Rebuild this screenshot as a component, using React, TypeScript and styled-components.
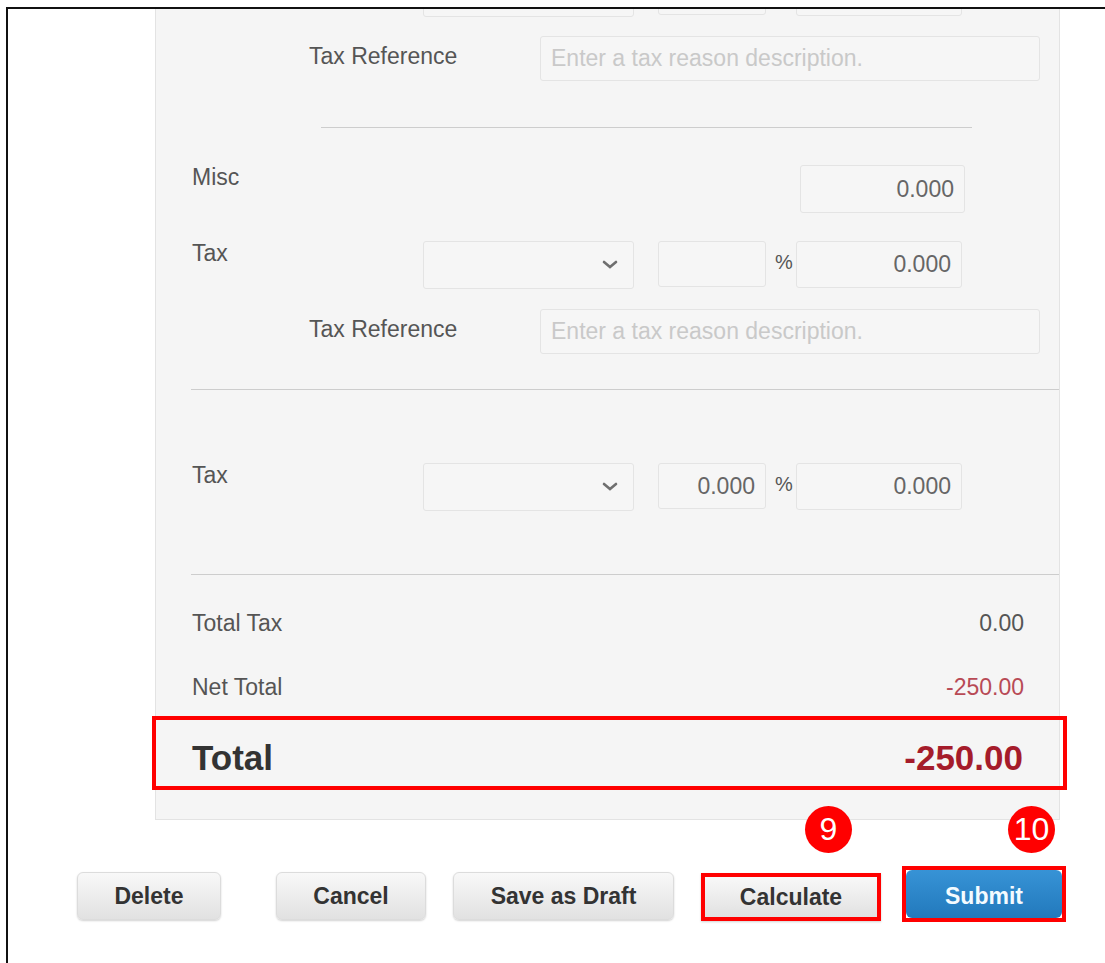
import React from "react";
import styled, { createGlobalStyle } from "styled-components";

const GlobalStyle = createGlobalStyle`
  html, body {
    margin: 0;
    padding: 0;
    background: #fff;
  }
  body {
    font-family: "Liberation Sans", Arial, sans-serif;
    color: #555;
  }
`;

const Frame = styled.div`
  margin: 7px 0 0 6px;
  height: 956px;
  box-sizing: border-box;
  border-top: 2px solid #111;
  border-left: 2px solid #111;
  overflow: hidden;
`;

const Panel = styled.div`
  margin-left: 147px;
  width: 905px;
  height: 811px;
  box-sizing: border-box;
  background: #f5f5f5;
  border: 1px solid #e3e3e3;
  border-top: none;
  display: flex;
  flex-direction: column;
`;

const FieldBox = styled.div<{ $width: number; $height?: number }>`
  width: ${(p) => p.$width}px;
  height: ${(p) => p.$height ?? 48}px;
  box-sizing: border-box;
  flex-shrink: 0;
  background: #f6f6f6;
  border: 1px solid #e4e4e4;
  border-radius: 3px;
  display: flex;
  align-items: center;
  padding: 0 10px;
  font-size: 23px;
  color: #666;
`;

const NumberBox = styled(FieldBox)`
  justify-content: flex-end;
`;

const Placeholder = styled.span`
  color: #c9c9c9;
`;

const SelectBox = styled(FieldBox)`
  justify-content: flex-end;
  padding-right: 15px;
`;

const Label = styled.div<{ $width: number }>`
  width: ${(p) => p.$width}px;
  flex-shrink: 0;
  font-size: 23px;
  line-height: 24px;
  color: #555;
`;

const RefLabel = styled(Label)`
  padding-bottom: 6px;
`;

const FieldRow = styled.div<{ $top: number }>`
  display: flex;
  align-items: flex-start;
  margin-top: ${(p) => p.$top}px;
  padding-left: 36px;
`;

const RefRow = styled.div<{ $top: number }>`
  display: flex;
  align-items: center;
  margin-top: ${(p) => p.$top}px;
  padding-left: 153px;
`;

const Percent = styled.div`
  width: 30px;
  flex-shrink: 0;
  padding: 10px 0 0 9px;
  box-sizing: border-box;
  font-size: 20px;
  color: #555;
`;

const Gap = styled.div<{ $w: number }>`
  width: ${(p) => p.$w}px;
  flex-shrink: 0;
`;

const Divider = styled.div<{ $top: number; $left: number; $width?: number }>`
  margin-top: ${(p) => p.$top}px;
  margin-left: ${(p) => p.$left}px;
  width: ${(p) => (p.$width ? `${p.$width}px` : "auto")};
  height: 1px;
  background: #cdcdcd;
`;

const SummaryRow = styled.div<{ $top: number }>`
  display: flex;
  justify-content: space-between;
  align-items: center;
  margin-top: ${(p) => p.$top}px;
  padding: 0 35px 0 36px;
  height: 32px;
  font-size: 23px;
`;

const SummaryValue = styled.span<{ $negative?: boolean }>`
  color: ${(p) => (p.$negative ? "#b84a55" : "#555")};
`;

const TotalRow = styled.div`
  display: flex;
  justify-content: space-between;
  align-items: center;
  margin: 13px -8px 0 -4px;
  height: 74px;
  box-sizing: border-box;
  border: 4px solid #ff0000;
  padding: 10px 40px 0 36px;
  font-size: 35px;
  font-weight: bold;
  color: #333;
`;

const TotalValue = styled.span`
  color: #a51c2b;
`;

const ButtonBar = styled.div`
  display: flex;
  align-items: flex-start;
  margin-top: 52px;
  padding-left: 69px;
`;

const Button = styled.button<{ $width: number; $offset: number; $marked?: boolean }>`
  position: relative;
  width: ${(p) => p.$width}px;
  height: 48px;
  margin-left: ${(p) => p.$offset}px;
  margin-top: ${(p) => (p.$marked ? 1 : 0)}px;
  padding: 0;
  box-sizing: border-box;
  border: ${(p) => (p.$marked ? "4px solid #ff0000" : "1px solid #dcdcdc")};
  border-radius: ${(p) => (p.$marked ? 0 : 6)}px;
  background: linear-gradient(#f8f8f8, #e1e1e1);
  box-shadow: 0 1px 2px rgba(0, 0, 0, 0.18);
  font-family: "Liberation Sans", Arial, sans-serif;
  font-size: 23px;
  font-weight: bold;
  color: #333;
  cursor: pointer;
`;

const SubmitFrame = styled.div`
  position: relative;
  margin: -6px 0 0 21px;
  border: 4px solid #ff0000;
`;

const SubmitButton = styled.button`
  display: block;
  width: 156px;
  height: 48px;
  padding: 4px 0 0;
  border: none;
  border-radius: 6px;
  background: linear-gradient(#3793d6, #2279bc);
  font-family: "Liberation Sans", Arial, sans-serif;
  font-size: 23px;
  font-weight: bold;
  color: #f4fbff;
  cursor: pointer;
`;

const StepBadge = styled.span<{ $left: number; $top: number }>`
  position: absolute;
  left: ${(p) => p.$left}px;
  top: ${(p) => p.$top}px;
  width: 47px;
  height: 47px;
  border-radius: 50%;
  background: #f00;
  color: #fff;
  font-family: "Liberation Sans", Arial, sans-serif;
  font-size: 32px;
  font-weight: normal;
  display: flex;
  align-items: center;
  justify-content: center;
`;

const Chevron = () => (
  <svg width="16" height="10" viewBox="0 0 16 10">
    <path d="M2 2 L8 7 L14 2" fill="none" stroke="#6f6f6f" strokeWidth="2.6" strokeLinecap="round" />
  </svg>
);

interface TaxLineProps {
  top: number;
  label?: string;
  rate?: string;
  amount?: string;
}

const TaxLine = ({ top, label, rate, amount }: TaxLineProps) => (
  <FieldRow $top={top}>
    <Label $width={231}>{label}</Label>
    <SelectBox $width={211}>
      <Chevron />
    </SelectBox>
    <Gap $w={24} />
    <NumberBox $width={108} $height={46}>
      {rate}
    </NumberBox>
    <Percent>{amount !== undefined && "%"}</Percent>
    <NumberBox $width={166} $height={47}>
      {amount}
    </NumberBox>
  </FieldRow>
);

const TaxReference = ({ top }: { top: number }) => (
  <RefRow $top={top}>
    <RefLabel $width={231}>Tax Reference</RefLabel>
    <FieldBox $width={500} $height={45}>
      <Placeholder>Enter a tax reason description.</Placeholder>
    </FieldBox>
  </RefRow>
);

export default function App() {
  return (
    <>
      <GlobalStyle />
      <Frame>
        <Panel>
          <TaxLine top={-40} />
          <TaxReference top={19} />
          <Divider $top={46} $left={165} $width={651} />

          <FieldRow $top={37}>
            <Label $width={608}>Misc</Label>
            <NumberBox $width={165}>0.000</NumberBox>
          </FieldRow>
          <TaxLine top={28} label="Tax" amount="0.000" />
          <TaxReference top={20} />
          <Divider $top={35} $left={35} />

          <TaxLine top={73} label="Tax" rate="0.000" amount="0.000" />
          <Divider $top={63} $left={35} />

          <SummaryRow $top={32}>
            <span>Total Tax</span>
            <SummaryValue>0.00</SummaryValue>
          </SummaryRow>
          <SummaryRow $top={32}>
            <span>Net Total</span>
            <SummaryValue $negative>-250.00</SummaryValue>
          </SummaryRow>
          <TotalRow>
            <span>Total</span>
            <TotalValue>-250.00</TotalValue>
          </TotalRow>
        </Panel>

        <ButtonBar>
          <Button $width={144} $offset={0}>
            Delete
          </Button>
          <Button $width={150} $offset={55}>
            Cancel
          </Button>
          <Button $width={221} $offset={27}>
            Save as Draft
          </Button>
          <Button $width={180} $offset={27} $marked>
            Calculate
            <StepBadge $left={100} $top={-71}>
              9
            </StepBadge>
          </Button>
          <SubmitFrame>
            <SubmitButton>Submit</SubmitButton>
            <StepBadge $left={102} $top={-64}>
              10
            </StepBadge>
          </SubmitFrame>
        </ButtonBar>
      </Frame>
    </>
  );
}
